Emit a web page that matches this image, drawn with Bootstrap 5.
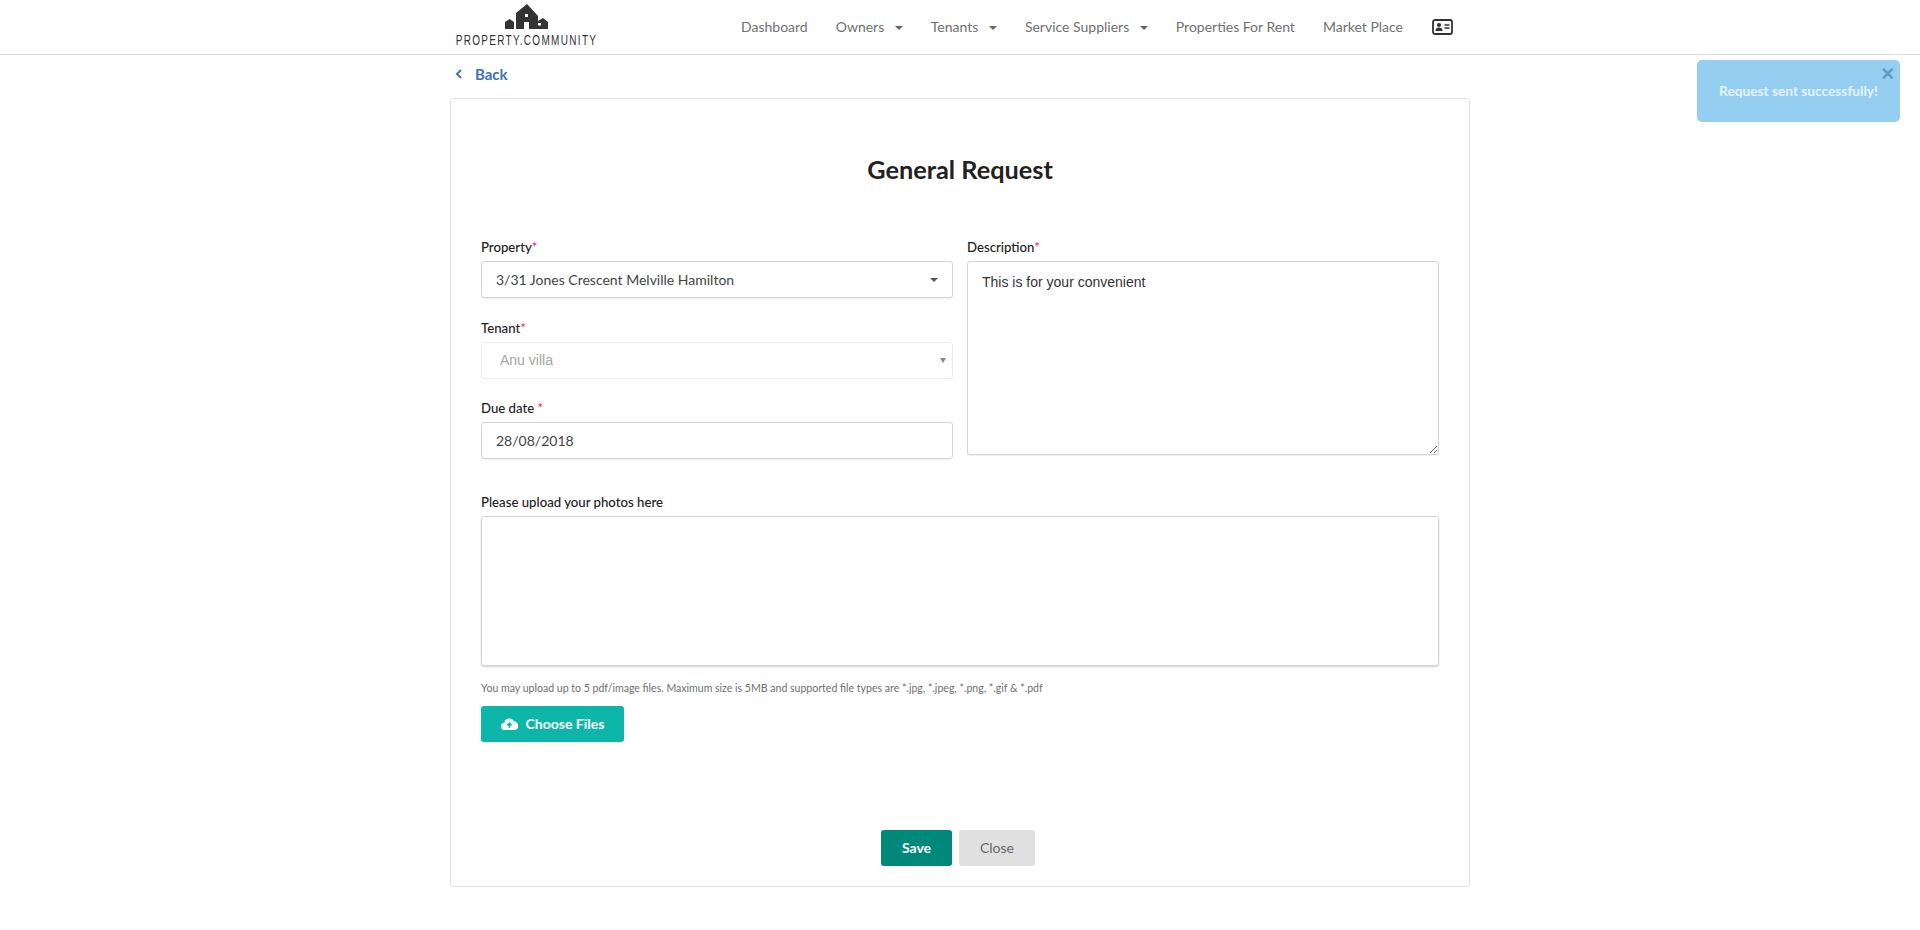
<!DOCTYPE html>
<html lang="en">
<head>
  <meta charset="UTF-8" />
  <meta name="viewport" content="width=device-width, initial-scale=1.0"/>
  <title>General Request - Property Community</title>
  <link href="https://cdn.jsdelivr.net/npm/bootstrap@5.3.2/dist/css/bootstrap.min.css" rel="stylesheet">
  <style>
    body { font-family: Lato, "Open Sans", sans-serif; font-size: 14px; color: #212121; background: #fff; }

    /* header */
    .top-bar { height: 55px; border-bottom: 1px solid #d9d9d9; }
    .top-inner { width: 1020px; margin: 0 auto; height: 54px; padding-left: 5px; }
    .brand-box { width: 142px; height: 54px; padding-top: 4px; display: flex; flex-direction: column; align-items: center; }
    .brand-name { font-family: "Liberation Sans", sans-serif; font-size: 15px; line-height: 13px; margin-top: 4px; letter-spacing: 2px; color: #333; transform: scaleX(.665); white-space: nowrap; }
    .top-links { margin-left: 144px; margin-top: -2px; gap: 28px; }
    .top-links a { color: #707070; font-size: 14px; text-decoration: none; white-space: nowrap; }
    .top-links .card-ico { margin: 2px 0 0 1px; }
    .caret-down { display: inline-block; margin-left: 7px; border: 4px solid transparent; border-top-color: #666; border-bottom: 0; vertical-align: 2px; }

    /* back link */
    .back-row { width: 1020px; margin: 0 auto; height: 43px; padding: 0 0 5px 5px; }
    .back-row a { color: #3d73b9; font-size: 15px; font-weight: 700; text-decoration: none; }

    /* form box */
    .form-box { width: 1020px; height: 789px; margin: 0 auto; border: 1px solid #e3e3e3; border-radius: 3px; padding: 0 30px; }
    .form-title { font-size: 25.3px; font-weight: 700; line-height: 30px; color: #212121; padding-top: 55px; height: 140px; margin: 0; text-align: center; }
    .field-label { display: block; font-size: 13.2px; line-height: 16px; height: 16px; margin: 0 0 6px; color: #212121; font-weight: 500; }
    .req { color: #e2344f; }
    .fake-field { height: 37px; border: 1px solid #d4d4d4; border-radius: 3px; box-shadow: 0 1px 1px rgba(0,0,0,.06); padding: 0 14px; color: #444; font-size: 14px; }
    .fake-field.off { border-color: #ececec; box-shadow: none; color: #a5a5a5; font-family: "Liberation Sans", sans-serif; padding-left: 18px; }
    .fake-field .caret-down { margin-left: 0; border-top-color: #555; }
    .fake-field.off .caret-down { border-width: 5px 3px 0; border-top-color: #8a8a8a; margin-right: -8px; }
    .gap-one { margin-bottom: 21px; }
    .gap-first { margin-bottom: 22px; }
    .two-cols { gap: 14px; }
    .desc-box { width: 100%; height: 194px; display: block; border: 1px solid #d4d4d4; border-radius: 3px; box-shadow: 0 1px 1px rgba(0,0,0,.06); padding: 10px 14px; font-family: "Liberation Sans", sans-serif; font-size: 14px; color: #333; }
    .upload-block { padding-top: 14px; }
    .upload-area { height: 150px; border: 1px solid #d4d4d4; border-radius: 3px; box-shadow: 0 1px 2px rgba(0,0,0,.18); }
    .hint-text { font-size: 10.55px; line-height: 14px; color: #6f6f6f; margin: 15px 0 11px; }
    .btn-files { width: 143px; height: 36px; background: #0eb6aa; border: 0; border-radius: 3px; color: #fff; font-weight: 700; font-size: 14px; padding: 0 0 2px; }
    .footer-btns { gap: 7px; margin-top: 88px; padding-right: 4px; }
    .btn-save, .btn-shut { height: 36px; border: 0; border-radius: 3px; font-size: 14px; padding: 0 0 2px; }
    .btn-save { width: 71px; background: #00897b; color: #fff; font-weight: 700; }
    .btn-shut { width: 76px; background: #e0e0e0; color: #666; }

    /* toast */
    .notice { position: absolute; top: 60px; left: 1697px; width: 203px; height: 62px; background: #94cff1; border-radius: 5px; color: #e4f3fc; font-size: 13.7px; font-weight: 700; }
    .notice-x { position: absolute; top: 4px; right: 6px; font-family: "Liberation Sans", sans-serif; font-size: 22px; line-height: 20px; color: #5b9cc6; font-weight: 700; }
  </style>
</head>
<body>
  <header class="top-bar">
    <div class="top-inner d-flex align-items-center">
      <div class="brand-box">
        <svg width="43" height="25" viewBox="0 0 43 25" fill="#333">
          <path d="M0 25V18L4.5 15 9 18V25Z"/>
          <path d="M11 25V9L22 0 33 12V25H24V18H19V25Z"/>
          <path d="M33 25V17L38 14 43 18V25Z"/>
          <rect x="20" y="10" width="3" height="3" fill="#fff"/>
          <rect x="33" y="19" width="3" height="2.5" fill="#fff"/>
        </svg>
        <div class="brand-name">PROPERTY.COMMUNITY</div>
      </div>
      <nav class="top-links d-flex align-items-center">
        <a href="#">Dashboard</a>
        <a href="#">Owners <span class="caret-down"></span></a>
        <a href="#">Tenants <span class="caret-down"></span></a>
        <a href="#">Service Suppliers <span class="caret-down"></span></a>
        <a href="#">Properties For Rent</a>
        <a href="#">Market Place</a>
        <a href="#" class="d-flex card-ico">
          <svg width="21" height="16" viewBox="0 0 21 16">
            <rect x="1" y="1" width="19" height="14" rx="2" fill="none" stroke="#333" stroke-width="1.8"/>
            <circle cx="7" cy="6" r="2.1" fill="#333"/>
            <path d="M3.5 12c0-2.4 1.5-3.4 3.5-3.4s3.5 1 3.5 3.4Z" fill="#333"/>
            <path d="M12.5 6h5M12.5 9h5" stroke="#333" stroke-width="1.4"/>
          </svg>
        </a>
      </nav>
    </div>
  </header>

  <div class="back-row d-flex align-items-center">
    <a href="#" class="d-flex align-items-center gap-2">
      <svg width="8" height="10" viewBox="0 0 8 10" class="me-1"><path d="M6 1 2 5l4 4" fill="none" stroke="#3d73b9" stroke-width="2"/></svg>
      Back
    </a>
  </div>

  <main class="form-box">
    <h1 class="form-title">General Request</h1>

    <div class="d-flex two-cols gap-one">
      <div class="flex-fill w-50">
        <label class="field-label">Property<span class="req">*</span></label>
        <div class="fake-field d-flex align-items-center justify-content-between gap-first">
          <span>3/31 Jones Crescent Melville Hamilton</span><span class="caret-down"></span>
        </div>
        <label class="field-label">Tenant<span class="req">*</span></label>
        <div class="fake-field off d-flex align-items-center justify-content-between gap-one">
          <span>Anu villa</span><span class="caret-down"></span>
        </div>
        <label class="field-label">Due date <span class="req">*</span></label>
        <div class="fake-field d-flex align-items-center">28/08/2018</div>
      </div>
      <div class="flex-fill w-50">
        <label class="field-label">Description<span class="req">*</span></label>
        <textarea class="desc-box">This is for your convenient</textarea>
      </div>
    </div>

    <div class="upload-block">
      <label class="field-label">Please upload your photos here</label>
      <div class="upload-area"></div>
      <p class="hint-text">You may upload up to 5 pdf/image files. Maximum size is 5MB and supported file types are *.jpg, *.jpeg, *.png, *.gif &amp; *.pdf</p>
      <button class="btn-files d-flex align-items-center justify-content-center gap-2">
        <svg width="17" height="13" viewBox="0 0 17 13">
          <path d="M4 13a3.6 3.6 0 0 1-.6-7.2A5 5 0 0 1 13 4.6 4.2 4.2 0 0 1 13.2 13Z" fill="#fff"/>
          <path d="M8.5 11V6.5M6.3 8.4l2.2-2.3 2.2 2.3" fill="none" stroke="#0eb6aa" stroke-width="1.5"/>
        </svg>
        Choose Files
      </button>
    </div>

    <div class="d-flex justify-content-center footer-btns">
      <button class="btn-save">Save</button>
      <button class="btn-shut">Close</button>
    </div>
  </main>

  <div class="notice d-flex align-items-center justify-content-center">
    <span class="notice-x">×</span>
    Request sent successfully!
  </div>
</body>
</html>
